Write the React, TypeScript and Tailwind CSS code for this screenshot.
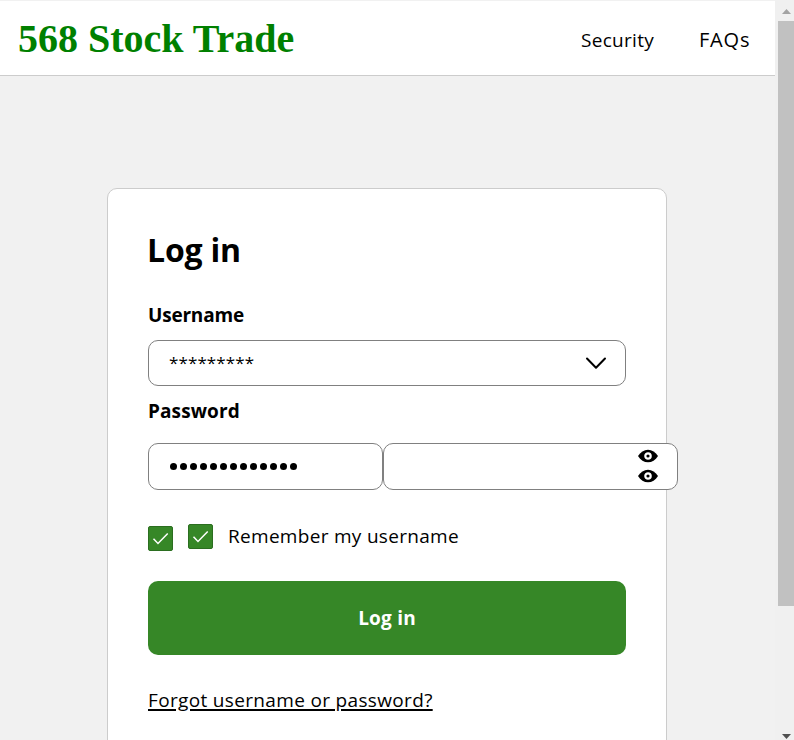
function Eye() {
  return (
    <svg className="block h-5 w-5" viewBox="0 0 20 20" aria-hidden="true">
      <path d="M0 10C2.5 6 6 3.7 10 3.7S17.5 6 20 10C17.5 14 14 16.3 10 16.3S2.5 14 0 10Z" fill="#000" />
      <circle cx="10" cy="10" r="2.7" fill="none" stroke="#fff" strokeWidth="2.2" />
    </svg>
  );
}

function Check() {
  return (
    <span className="block h-[25px] w-[25px] rounded-[2px] border border-[#2b6e20] bg-[#368727]">
      <svg className="block h-[23px] w-[23px]" viewBox="0 0 23 23" fill="none" aria-hidden="true">
        <path d="M4.5 11.8 9 16.5 18.7 6.5" stroke="#fff" strokeWidth="1.5" />
      </svg>
    </span>
  );
}

export default function App() {
  return (
    <div className="flex h-[740px] w-[794px] overflow-hidden bg-[#f1f1f1] font-['Open_Sans',sans-serif] text-[19px] text-black">
      <div className="w-[775px] shrink-0 pt-px">
        <header className="flex h-[75px] items-center justify-between border-b border-[#ccc] bg-white pl-[18px] pr-[25px]">
          <div className="pt-px font-['Liberation_Serif',serif] text-[40px] font-bold leading-[44px] text-[#008000]">568 Stock Trade</div>
          <nav className="flex gap-[45px] pt-[5px]">
            <a className="w-[73px] whitespace-nowrap tracking-[0.3px]">Security</a>
            <a className="w-[51px] whitespace-nowrap text-[20px] leading-7 tracking-[0.8px]">FAQs</a>
          </nav>
        </header>
        <main className="ml-[107px] mt-[112px] h-[600px] w-[560px] rounded-[10px] border border-[#ccc] bg-white px-10 pt-10">
          <h1 className="-ml-px h-[74px] text-[32px] font-bold leading-[42px] tracking-[-0.2px]">Log in</h1>
          <div className="h-[37px] font-bold leading-6 tracking-[-0.2px]">Username</div>
          <div className="flex h-[46px] w-[478px] items-center justify-between rounded-[10px] border border-[#808080] pl-5 pr-[18px]">
            <span className="text-[17px] tracking-[0.1px]">*********</span>
            <svg className="h-[22px] w-[22px]" viewBox="0 0 22 22" fill="none" stroke="#000" strokeWidth="2" strokeLinecap="round" strokeLinejoin="round" aria-hidden="true">
              <path d="M2 6.5 11 15.8 20 6.5" />
            </svg>
          </div>
          <div className="mt-[13px] h-[44px] font-bold leading-6 tracking-[0.1px]">Password</div>
          <div className="flex h-[47px] w-[530px]">
            <div className="flex w-[235px] items-center gap-[3px] rounded-[10px] border border-[#808080] bg-white pb-px pl-[21px]">
              {Array.from({ length: 13 }, (_, i) => (
                <span key={i} className="h-[7px] w-[7px] rounded-full bg-black" />
              ))}
            </div>
            <div className="flex w-[295px] flex-col items-end rounded-[10px] border border-[#808080] bg-white pr-[19px] pt-[2px]">
              <Eye />
              <Eye />
            </div>
          </div>
          <div className="mt-[34px] flex h-[27px] items-start">
            <div className="pt-[2px]"><Check /></div>
            <div className="ml-[15px]"><Check /></div>
            <span className="ml-[15px] whitespace-nowrap leading-[25px] tracking-[0.3px]">Remember my username</span>
          </div>
          <button className="mt-[30px] block h-[74px] w-[478px] rounded-[10px] bg-[#368727] font-bold tracking-[0.2px] text-white">Log in</button>
          <a className="mt-[33px] block whitespace-nowrap leading-6 tracking-[0.34px] underline decoration-[2px] underline-offset-[2px]">Forgot username or password?</a>
        </main>
      </div>
      <div className="flex w-[19px] flex-col items-end bg-[#f0f0f0]">
        <svg className="h-[21px] w-4 shrink-0" viewBox="0 0 16 21" aria-hidden="true">
          <path d="M4 14 8.5 9 13 14Z" fill="#a3a3a3" />
        </svg>
        <div className="h-[585px] w-4 bg-[#c1c1c1]" />
        <svg className="mt-auto h-[21px] w-4 shrink-0" viewBox="0 0 16 21" aria-hidden="true">
          <path d="M4 15 13 15 8.5 20Z" fill="#505050" />
        </svg>
      </div>
    </div>
  );
}
